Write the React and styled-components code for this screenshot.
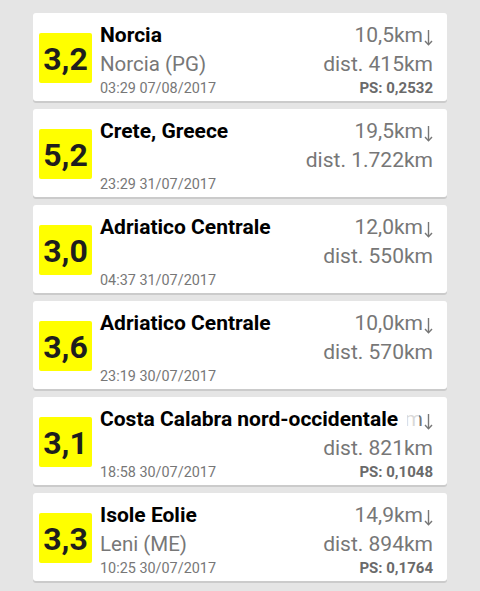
import React from "react";
import styled, { createGlobalStyle } from "styled-components";

const Global = createGlobalStyle`
  html, body { margin: 0; padding: 0; background: #e5e5e5; }
  body { font-family: Roboto, "Liberation Sans", sans-serif; }
`;

const List = styled.div`
  display: flex;
  flex-direction: column;
  gap: 8px;
  padding: 13px 33px;
`;

const Card = styled.div`
  display: flex;
  align-items: center;
  height: 88px;
  background: #fff;
  border-radius: 3px;
  box-shadow: 0 2px 0 #cbcbcb;
  padding: 0 14px 0 6px;
  box-sizing: border-box;
`;

const Mag = styled.div`
  flex: none;
  width: 53px;
  height: 50px;
  margin-top: 1px;
  background: #ffff00;
  border-radius: 2px;
  display: flex;
  align-items: center;
  justify-content: center;
  font-size: 32px;
  font-weight: 700;
  color: #1e1e1e;
  padding-top: 3px;
  box-sizing: border-box;
`;

const Body = styled.div`
  flex: 1;
  min-width: 0;
  margin-left: 8px;
  align-self: stretch;
  padding-top: 9px;
  display: flex;
  flex-direction: column;
`;

const Row = styled.div`
  display: grid;
  grid-template-columns: 100%;
  height: ${(p) => p.$h}px;
  line-height: ${(p) => p.$h}px;
  white-space: nowrap;
  & > * { grid-area: 1 / 1; }
`;

const Title = styled.span`
  justify-self: start;
  z-index: 1;
  font-size: 21px;
  font-weight: 700;
  color: #000;
  background: linear-gradient(
    to right,
    #fff calc(100% - 12px),
    rgba(255, 255, 255, 0.72) calc(100% - 12px)
  );
  padding-right: ${(p) => (p.$long ? 21 : 0)}px;
`;

const Sub = styled.span`
  justify-self: start;
  font-size: 20.5px;
  color: #777;
`;

const Date = styled.span`
  justify-self: start;
  font-size: 14.4px;
  color: #777;
`;

const Right = styled.span`
  justify-self: end;
  font-size: 21px;
  color: #777;
  display: inline-flex;
  align-items: baseline;
`;

const ArrowIcon = styled.svg`
  width: 9px;
  height: 17px;
  margin-left: 1px;
  align-self: center;
  transform: translateY(2px);
`;

const PS = styled.span`
  justify-self: end;
  font-size: 15px;
  font-weight: 700;
  color: #6a6a6a;
`;

const Arrow = () => (
  <ArrowIcon viewBox="0 0 9 17" fill="none" stroke="#777" strokeWidth="1.4">
    <path d="M4.5 1 V15.5" />
    <path d="M1 12 L4.5 15.8 L8 12" />
  </ArrowIcon>
);

const data = [
  { m: "3,2", t: "Norcia", s: "Norcia (PG)", d: "03:29 07/08/2017", k: "10,5km", dist: "dist. 415km", ps: "PS: 0,2532" },
  { m: "5,2", t: "Crete, Greece", s: "", d: "23:29 31/07/2017", k: "19,5km", dist: "dist. 1.722km" },
  { m: "3,0", t: "Adriatico Centrale", s: "", d: "04:37 31/07/2017", k: "12,0km", dist: "dist. 550km" },
  { m: "3,6", t: "Adriatico Centrale", s: "", d: "23:19 30/07/2017", k: "10,0km", dist: "dist. 570km" },
  { m: "3,1", t: "Costa Calabra nord-occidentale", s: "", d: "18:58 30/07/2017", k: "13,0km", dist: "dist. 821km", ps: "PS: 0,1048", long: true },
  { m: "3,3", t: "Isole Eolie", s: "Leni (ME)", d: "10:25 30/07/2017", k: "14,9km", dist: "dist. 894km", ps: "PS: 0,1764" },
];

export default function App() {
  return (
    <>
      <Global />
      <List>
        {data.map((e, i) => (
          <Card key={i}>
            <Mag>{e.m}</Mag>
            <Body>
              <Row $h={27}>
                <Right>
                  {e.k}
                  <Arrow />
                </Right>
                <Title $long={e.long}>{e.t}</Title>
              </Row>
              <Row $h={31}>
                <Sub>{e.s}</Sub>
                <Right>{e.dist}</Right>
              </Row>
              <Row $h={17}>
                <Date>{e.d}</Date>
                {e.ps && <PS>{e.ps}</PS>}
              </Row>
            </Body>
          </Card>
        ))}
      </List>
    </>
  );
}
